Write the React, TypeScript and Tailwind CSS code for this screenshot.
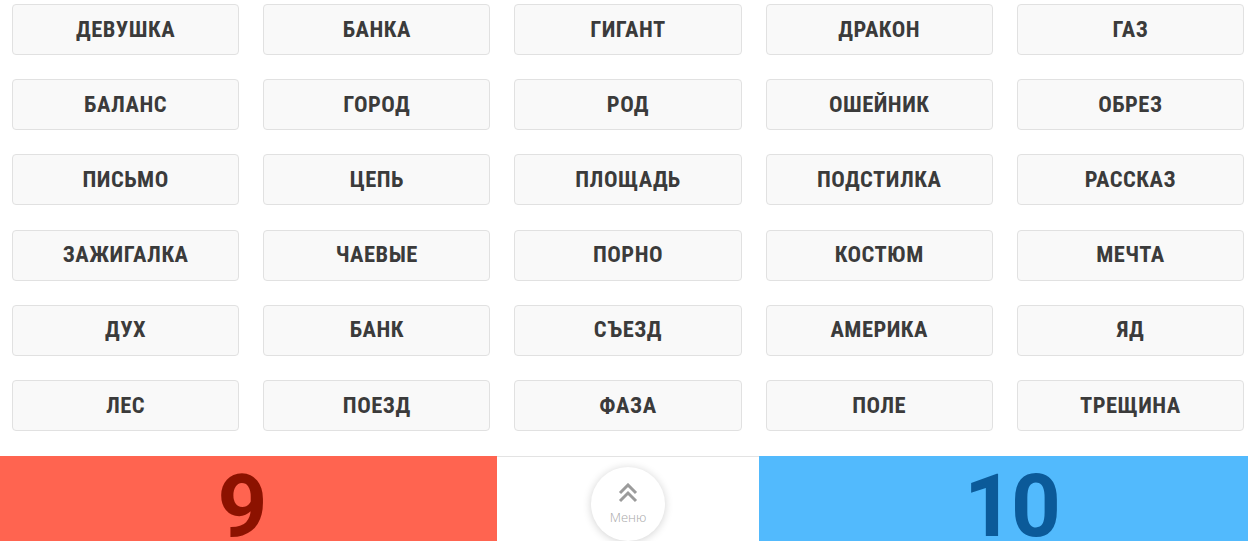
const words = [
  'ДЕВУШКА', 'БАНКА', 'ГИГАНТ', 'ДРАКОН', 'ГАЗ',
  'БАЛАНС', 'ГОРОД', 'РОД', 'ОШЕЙНИК', 'ОБРЕЗ',
  'ПИСЬМО', 'ЦЕПЬ', 'ПЛОЩАДЬ', 'ПОДСТИЛКА', 'РАССКАЗ',
  'ЗАЖИГАЛКА', 'ЧАЕВЫЕ', 'ПОРНО', 'КОСТЮМ', 'МЕЧТА',
  'ДУХ', 'БАНК', 'СЪЕЗД', 'АМЕРИКА', 'ЯД',
  'ЛЕС', 'ПОЕЗД', 'ФАЗА', 'ПОЛЕ', 'ТРЕЩИНА',
];

function WordCard({ word }: { word: string }) {
  return (
    <div className="flex h-[51px] items-center justify-center rounded-[4px] border border-[#e1e1e1] bg-[#f9f9f9]">
      <span className="font-['Roboto_Condensed','Liberation_Sans_Narrow','DejaVu_Sans_Condensed',sans-serif] text-[22.5px] font-bold tracking-[0.5px] text-[#3b3b3b]">
        {word}
      </span>
    </div>
  );
}

function MenuButton() {
  return (
    <div className="flex h-[74px] w-[74px] flex-col items-center justify-center rounded-full bg-white pt-[2px] shadow-[0_1px_8px_rgba(0,0,0,0.18)]">
      <svg width="22" height="20" viewBox="0 0 22 20" fill="none" stroke="#9b9b9b" strokeWidth="3">
        <polyline points="3,10 11,2 19,10" />
        <polyline points="3,18 11,10 19,18" />
      </svg>
      <span className="mt-[5px] font-['Open_Sans',sans-serif] text-[13px] font-light text-[#a8a8a8]">Меню</span>
    </div>
  );
}

export default function App() {
  return (
    <div className="h-[541px] w-[1248px] overflow-hidden bg-white">
      <div className="grid grid-cols-5 gap-x-6 gap-y-[24.2px] pl-3 pr-1 pt-1">
        {words.map((w) => (
          <WordCard key={w} word={w} />
        ))}
      </div>
      <div className="mt-[25px] flex h-[110px]">
        <div className="flex w-[497px] justify-center bg-[#ff6450] pr-[12px] pt-[7px]">
          <span className="font-['Roboto',sans-serif] text-[87px] font-bold leading-none text-[#8c1200]">9</span>
        </div>
        <div className="flex w-[262px] justify-center border-t border-[#e3e3e3] pt-[10px]">
          <MenuButton />
        </div>
        <div className="flex flex-1 justify-center bg-[#52bafd] pl-[15px] pt-[7px]">
          <span className="font-['Roboto',sans-serif] text-[87px] font-bold leading-none tracking-[-3px] text-[#0b5a99]">10</span>
        </div>
      </div>
    </div>
  );
}
